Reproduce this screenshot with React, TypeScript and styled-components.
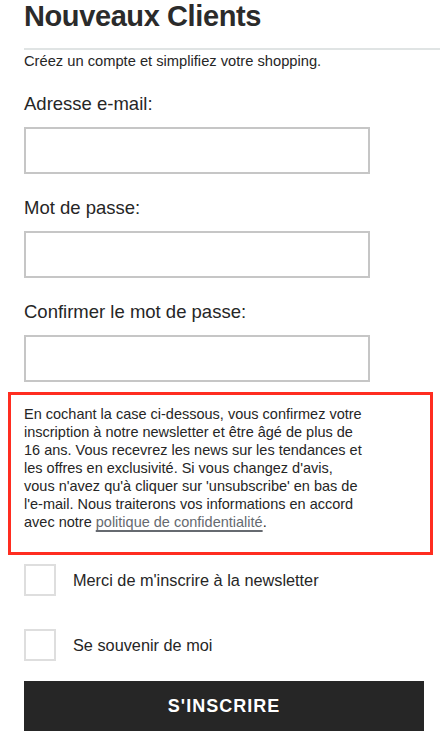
import * as React from 'react';
import styled, { createGlobalStyle } from 'styled-components';

const Global = createGlobalStyle`
    html, body {
        margin: 0;
        padding: 0;
        background: #ffffff;
    }
    body {
        font-family: "Liberation Sans", Arial, sans-serif;
        color: #262626;
    }
`;

const Page = styled.div`
    width: 440px;
    overflow: hidden;
`;

const Title = styled.h1`
    margin: 0;
    padding: 0 24px;
    font-size: 29px;
    line-height: 32px;
    font-weight: 700;
    letter-spacing: -0.4px;
    color: #2b2b2b;
`;

const Divider = styled.div`
    margin: 16px 0 0 24px;
    height: 2px;
    background: #e0e4e4;
`;

const Intro = styled.p`
    margin: 2px 24px 0;
    font-size: 14.7px;
    line-height: 18px;
`;

const Form = styled.form`
    padding: 0 16px 0 24px;
    display: flex;
    flex-direction: column;
`;

const Field = styled.div`
    display: flex;
    flex-direction: column;
    margin-top: 23px;
`;

const Label = styled.label`
    font-size: 18.5px;
    line-height: 22px;
    margin-bottom: 12px;
`;

const Input = styled.input`
    box-sizing: border-box;
    width: 346px;
    height: 47px;
    border: 2px solid #c6c6c6;
    outline: none;
    padding: 0 10px;
    font: inherit;
`;

const Notice = styled.div`
    margin: 10px -9px 0 -16px;
    border: 3px solid #ff2d20;
    padding: 10px 0 21px 13px;
`;

const NoticeText = styled.p`
    margin: 0;
    font-size: 14.5px;
    line-height: 18px;
    white-space: nowrap;
`;

const PolicyLink = styled.a`
    color: #666a70;
    text-decoration: underline;
    text-decoration-color: #666a70;
    text-decoration-thickness: 2px;
    text-underline-offset: 3px;
`;

const CheckRow = styled.label`
    display: flex;
    align-items: center;
    gap: 17px;
    margin-top: ${(p: { $top: number }) => p.$top}px;
    font-size: 16.3px;
`;

const Box = styled.span`
    box-sizing: border-box;
    width: 32px;
    height: 32px;
    border: 2px solid #dedede;
    flex-shrink: 0;
`;

const Submit = styled.button`
    margin-top: 20px;
    width: 400px;
    height: 50px;
    border: none;
    background: #262626;
    color: #ffffff;
    font-family: "Liberation Sans", Arial, sans-serif;
    font-weight: 700;
    font-size: 18px;
    letter-spacing: 1px;
`;

export default function App() {
    return (
        <Page>
            <Global />
            <Title>Nouveaux Clients</Title>
            <Divider />
            <Intro>Créez un compte et simplifiez votre shopping.</Intro>
            <Form onSubmit={(e) => e.preventDefault()}>
                <Field>
                    <Label>Adresse e-mail:</Label>
                    <Input type="email" />
                </Field>
                <Field>
                    <Label>Mot de passe:</Label>
                    <Input type="password" />
                </Field>
                <Field>
                    <Label>Confirmer le mot de passe:</Label>
                    <Input type="password" />
                </Field>
                <Notice>
                    <NoticeText>
                        En cochant la case ci-dessous, vous confirmez votre<br />
                        inscription à notre newsletter et être âgé de plus de<br />
                        16 ans. Vous recevrez les news sur les tendances et<br />
                        les offres en exclusivité. Si vous changez d'avis,<br />
                        vous n'avez qu'à cliquer sur 'unsubscribe' en bas de<br />
                        l'e-mail. Nous traiterons vos informations en accord<br />
                        avec notre <PolicyLink href="#">politique de confidentialité</PolicyLink>.
                    </NoticeText>
                </Notice>
                <CheckRow $top={9}>
                    <Box />
                    Merci de m'inscrire à la newsletter
                </CheckRow>
                <CheckRow $top={33}>
                    <Box />
                    Se souvenir de moi
                </CheckRow>
                <Submit type="submit">S'INSCRIRE</Submit>
            </Form>
        </Page>
    );
}
